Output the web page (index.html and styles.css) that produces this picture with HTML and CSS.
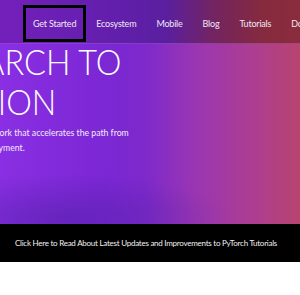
FILE: index.html
```html
<!DOCTYPE html>
<html>
<head>
 <title>PyTorch</title>
 <link rel="stylesheet" href="styles.css">
</head>
<body>
  <div class="page">
    <div class="hero">
      <div class="header">
        <ul class="nav">
          <li class="nav-item nav-focus">Get Started</li>
          <li class="nav-item">Ecosystem</li>
          <li class="nav-item">Mobile</li>
          <li class="nav-item">Blog</li>
          <li class="nav-item">Tutorials</li>
          <li class="nav-item">Docs</li>
        </ul>
      </div>
      <div class="hero-body">
        <h1 class="hero-title">
          <span class="title-line line-one">FROM RESEARCH TO</span>
          <span class="title-line line-two">PRODUCTION</span>
        </h1>
        <p class="hero-text">An open source machine learning framework that accelerates the path from<br>research prototyping to production deployment.</p>
      </div>
    </div>
    <div class="notice">
      <a class="notice-link" href="#">Click Here to Read About Latest Updates and Improvements to PyTorch Tutorials</a>
    </div>
  </div>
</body>
</html>
```

FILE: styles.css
```css
html, body{margin:0;padding:0;background:#fff;overflow:hidden;}
body{font-family:Lato, "Open Sans", sans-serif;width:300px;height:295px;}

.page{width:300px;overflow:hidden;}

.hero{
  height:224px;overflow:hidden;
  background:
    radial-gradient(ellipse 170px 45px at 60px 218px, rgba(75,30,160,0.5), rgba(75,30,160,0) 100%),
    linear-gradient(90deg, #8a2fe3 0%, #7b27d4 35%, #7d29cc 48%, #9a36b2 65%, #ad3e90 85%, #b8446f 100%);
}

.header{
  height:44px;
  background:
    linear-gradient(90deg, #7320ba 0%, #661fb0 30%, #5a1fa0 55%, #74245f 72%, #862a3d 88%, #8b2b3e 100%);
  border-bottom:1px solid rgba(200,120,255,0.35);
  box-sizing:border-box;
}

.nav{list-style:none;margin:0;padding:3px 0 0 23px;display:flex;align-items:center;height:44px;box-sizing:border-box;white-space:nowrap;}
.nav-item{color:#f1e6f6;font-size:9px;letter-spacing:-0.2px;padding:0 10px;line-height:34px;}
.nav-focus{border:3px solid #000;padding:0 7px;height:37px;line-height:31px;box-sizing:border-box;}

.hero-body{padding-top:0;}
.hero-title{margin:-3px 0 0 0;color:#fff;font-weight:300;font-size:36px;line-height:40px;white-space:nowrap;}
.title-line{display:block;transform:scaleX(0.9);transform-origin:left center;}
.line-one{margin-left:-193px;}
.line-two{margin-left:-155px;}

.hero-text{
  margin:4px 0 0 -158px;color:#f4ecfa;font-size:8.7px;line-height:15px;white-space:nowrap;
}

.notice{background:#000;height:38px;display:flex;align-items:center;justify-content:center;padding-right:8px;}
.notice-link{color:#f0f0f0;font-size:8px;letter-spacing:-0.25px;text-decoration:none;white-space:nowrap;}
```
